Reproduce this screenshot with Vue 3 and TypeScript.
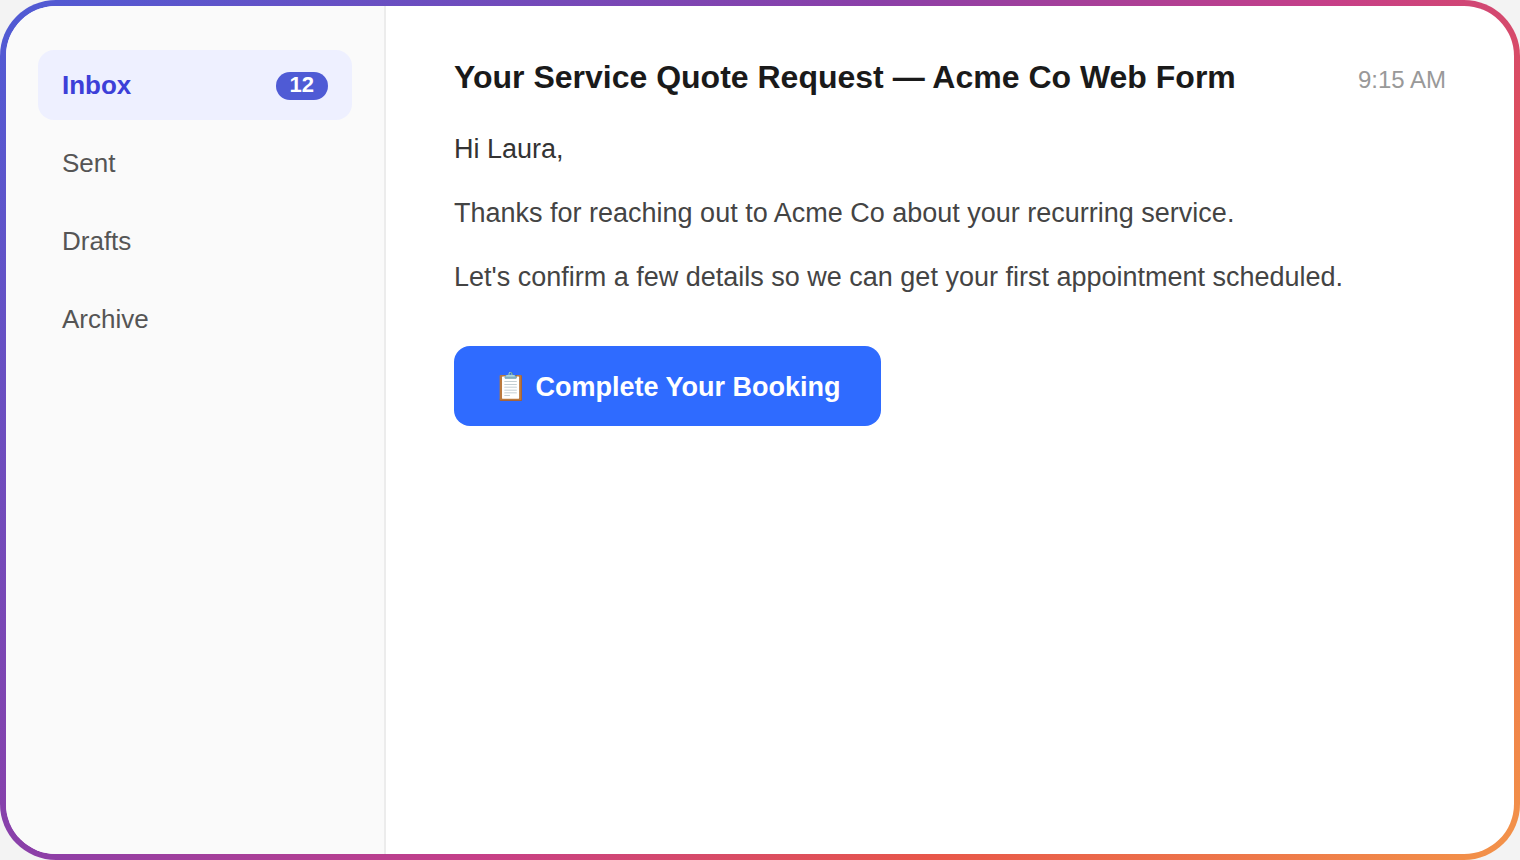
<script setup lang="ts">
import { ref } from 'vue'

interface Folder {
  name: string
  count?: number
}

const folders: Folder[] = [
  { name: 'Inbox', count: 12 },
  { name: 'Sent' },
  { name: 'Drafts' },
  { name: 'Archive' },
]

const active = ref('Inbox')
</script>

<template>
  <div class="frame">
    <div class="window">
      <nav class="sidebar" aria-label="Mail folders">
        <a
          v-for="folder in folders"
          :key="folder.name"
          href="#"
          class="folder"
          :class="{ active: folder.name === active }"
          @click.prevent="active = folder.name"
        >
          <span>{{ folder.name }}</span>
          <span v-if="folder.count" class="badge">{{ folder.count }}</span>
        </a>
      </nav>
      <main class="message">
        <header class="message-header">
          <h1>Your Service Quote Request — Acme Co Web Form</h1>
          <time datetime="09:15">9:15 AM</time>
        </header>
        <p class="greeting">Hi Laura,</p>
        <p>Thanks for reaching out to Acme Co about your recurring service.</p>
        <p>Let's confirm a few details so we can get your first appointment scheduled.</p>
        <button type="button" class="cta">📋 Complete Your Booking</button>
      </main>
    </div>
  </div>
</template>

<style>
body {
  margin: 0;
  background: #f3f3f3;
}
</style>

<style scoped>
.frame {
  box-sizing: border-box;
  display: flex;
  min-height: 100vh;
  padding: 6px;
  border-radius: 56px;
  background: linear-gradient(135deg, #4f5bd5 0%, #8b3fa8 37%, #c63f88 56%, #e8564a 75%, #f39449 100%);
  font-family: "Liberation Sans", Arial, sans-serif;
}

.window {
  display: flex;
  flex: 1;
  min-width: 0;
  border-radius: 50px;
  overflow: hidden;
  background: #fff;
}

.sidebar {
  box-sizing: border-box;
  display: flex;
  flex-direction: column;
  gap: 8px;
  flex: 0 0 380px;
  padding: 44px 32px;
  border-right: 2px solid #ececec;
  background: #fafafa;
}

.folder {
  display: flex;
  align-items: flex-end;
  justify-content: space-between;
  padding: 20px 24px;
  border-radius: 16px;
  color: #555;
  font-size: 26px;
  line-height: 30px;
  text-decoration: none;
}

.folder.active {
  background: #eef0ff;
  color: #3d3fd8;
  font-weight: 700;
}

.badge {
  padding: 0 14px 2px;
  border-radius: 14px;
  background: #4f5bd5;
  color: #fff;
  font-size: 22px;
  line-height: 26px;
}

.message {
  flex: 1;
  min-width: 0;
  padding: 52px 68px;
}

.message-header {
  display: flex;
  align-items: baseline;
  justify-content: space-between;
  gap: 24px;
  margin-bottom: 30px;
}

h1 {
  margin: 0;
  color: #1a1a1a;
  font-size: 32px;
  line-height: 39px;
}

time {
  color: #999;
  font-size: 24px;
  white-space: nowrap;
}

p {
  margin: 0 0 20px;
  color: #444;
  font-size: 27px;
  line-height: 44px;
}

.greeting {
  color: #333;
}

.cta {
  margin-top: 27px;
  padding: 25px 40px 23px;
  border: 0;
  border-radius: 16px;
  background: #2f6bff;
  color: #fff;
  font: 700 27px/32px "Liberation Sans", Arial, sans-serif;
  cursor: pointer;
}
</style>
